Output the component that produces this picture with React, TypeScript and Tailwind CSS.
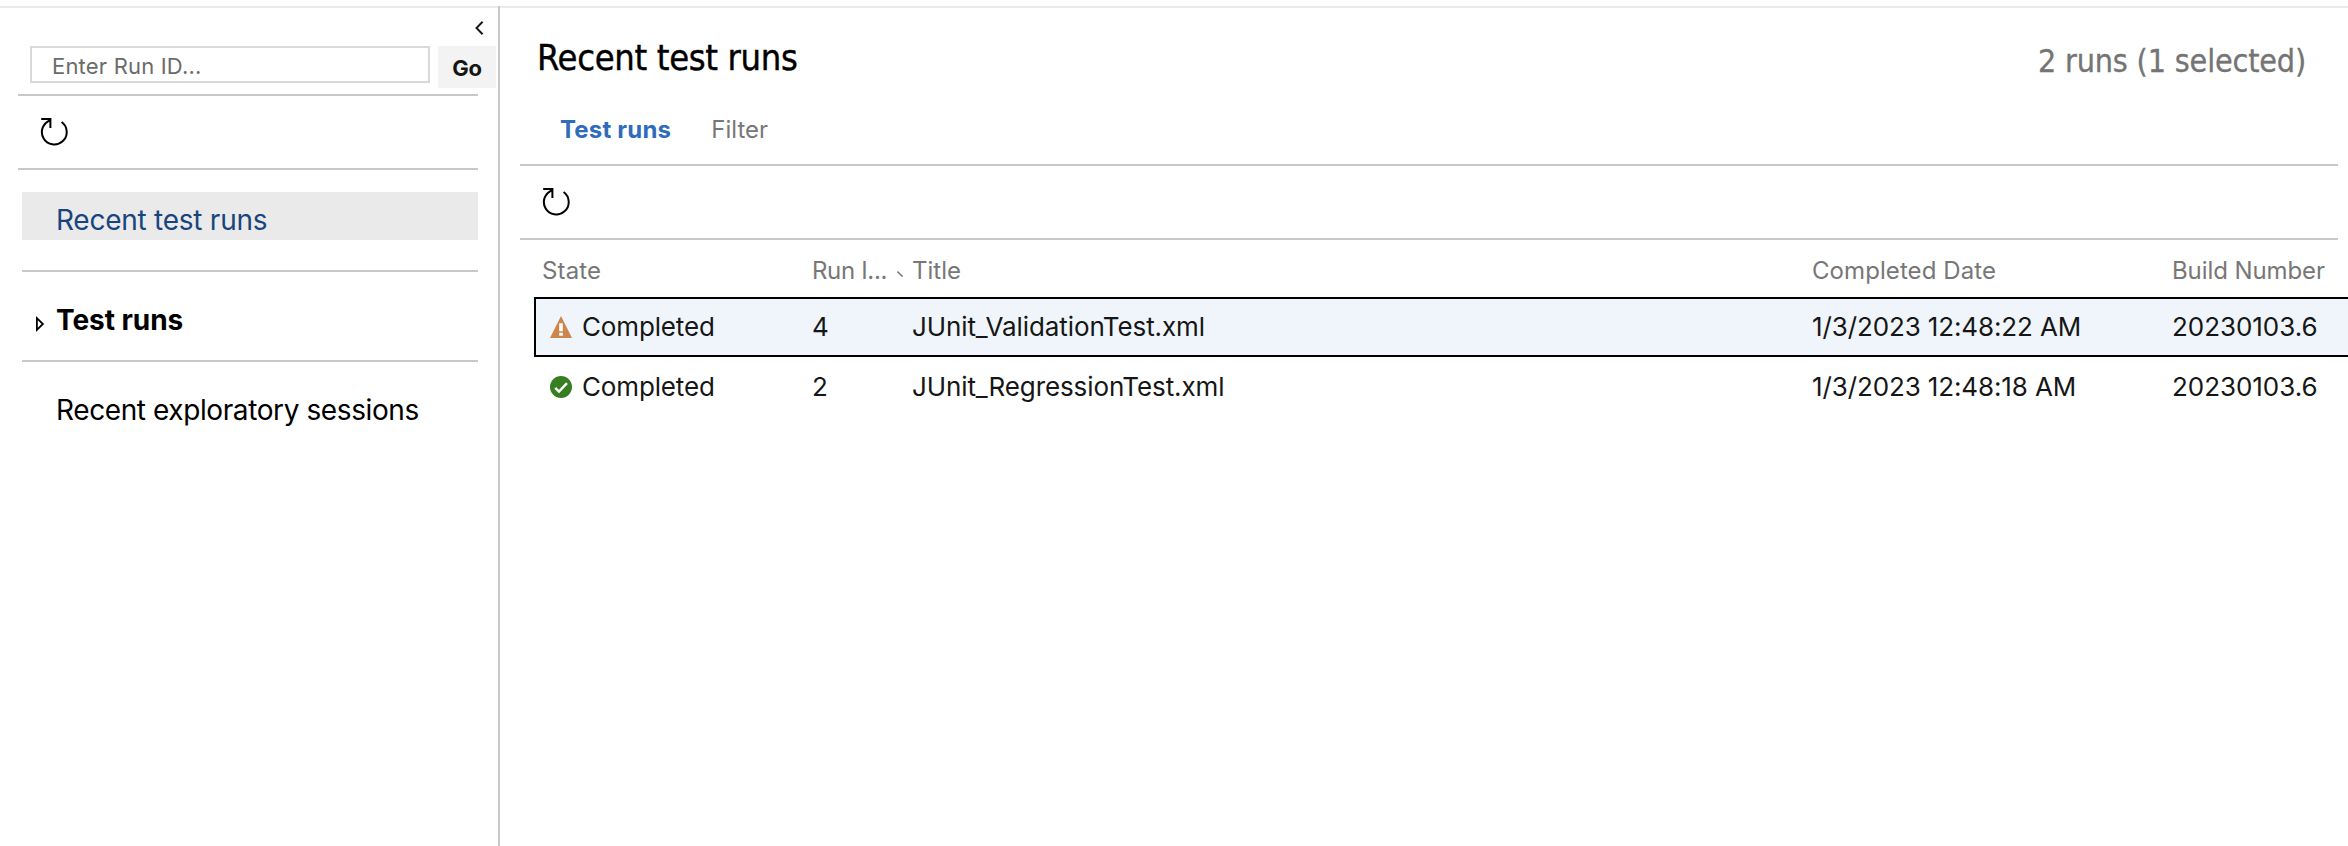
type Run = {
  state: "warning" | "passed";
  id: number;
  title: string;
  date: string;
  build: string;
  selected: boolean;
};

const runs: Run[] = [
  { state: "warning", id: 4, title: "JUnit_ValidationTest.xml", date: "1/3/2023 12:48:22 AM", build: "20230103.6", selected: true },
  { state: "passed", id: 2, title: "JUnit_RegressionTest.xml", date: "1/3/2023 12:48:18 AM", build: "20230103.6", selected: false },
];

function RefreshIcon() {
  return (
    <svg width="28" height="30" viewBox="0 0 28 30" fill="none" stroke="#000" strokeWidth="2" className="block">
      <path d="M21.6 5A12.4 12.4 0 1 1 10.6 3.2" />
      <path d="M1.2 2H10.4V11" />
    </svg>
  );
}

function WarningIcon() {
  return (
    <svg width="22" height="22" viewBox="0 0 22 22" className="block shrink-0">
      <path d="M11 0L22 22H0Z" fill="#cd854b" />
      <path d="M9.2 7.3h3.6v8H9.2zM9.2 16.8h3.6v3H9.2z" fill="#fff" />
    </svg>
  );
}

function PassedIcon() {
  return (
    <svg width="22" height="22" viewBox="0 0 22 22" className="block shrink-0">
      <circle cx="11" cy="11" r="11" fill="#377d22" />
      <path d="M5.2 11.8L9 15.6L17 7.2" fill="none" stroke="#fff" strokeWidth="2.4" />
    </svg>
  );
}

function Sidebar() {
  return (
    <aside className="-mt-[2px] flex w-[500px] shrink-0 flex-col border-r-2 border-[#c8c8c8] pt-[2px]">
      <div className="flex h-[38px] items-end justify-end pr-[14px]">
        <svg width="9" height="14" viewBox="0 0 9 14" fill="none" stroke="#1a1a1a" strokeWidth="2" className="mb-[11px] block">
          <path d="M7.6 0.7L1.5 7L7.6 13.3" />
        </svg>
      </div>
      <div className="flex h-12 items-start pl-[30px]">
        <input
          placeholder="Enter Run ID..."
          className="h-[37px] w-[400px] border-2 border-[#d9d9d9] pt-[3px] pl-5 text-[22px] tracking-[0.19px] text-black placeholder:text-[#6b6b6b]"
        />
        <button className="ml-2 h-[42px] w-[58px] bg-[#f3f3f3] pt-[2px] text-[22px] leading-10 font-bold tracking-[-0.3px] text-[#161616]">Go</button>
      </div>
      <div className="ml-[18px] flex h-[76px] w-[460px] items-center border-y-2 border-[#c8c8c8] pl-[22px]">
        <RefreshIcon />
      </div>
      <nav className="ml-[22px] flex w-[456px] flex-col text-[28px] leading-10 text-black">
        <a className="mt-[22px] h-12 bg-[#eaeaea] pt-2 pl-[34px] tracking-[-0.25px] text-[#19457e]">Recent test runs</a>
        <div className="mt-[30px] flex h-[92px] items-center border-y-2 border-[#c8c8c8] pt-2 pl-[14px] font-bold tracking-[-0.06px]">
          <svg width="9" height="16" viewBox="0 0 9 16" fill="none" stroke="#000" strokeWidth="1.8" className="mt-[7px] block">
            <path d="M0.9 2.2V13.8L6.9 8Z" />
          </svg>
          <span className="ml-[11px]">Test runs</span>
        </div>
        <a className="flex h-24 items-center pl-[34px] tracking-[-0.4px]">Recent exploratory sessions</a>
      </nav>
    </aside>
  );
}

function RunRow({ run }: { run: Run }) {
  return (
    <div
      className={
        "ml-[34px] grid h-[60px] grid-cols-[276px_100px_900px_360px_1fr] items-center border-y-2 border-l-2 pb-px text-[26px] leading-8 text-[#161616] " +
        (run.selected ? "border-black bg-[#eff5fb]" : "border-transparent")
      }
    >
      <div className="flex items-center gap-[10px] pl-[14px] tracking-[-0.143px]">
        {run.state === "warning" ? <WarningIcon /> : <PassedIcon />}
        <span>Completed</span>
      </div>
      <div>{run.id}</div>
      <div className="tracking-[-0.1px]">{run.title}</div>
      <div className="tracking-[-0.12px]">{run.date}</div>
      <div className="tracking-[-0.05px]">{run.build}</div>
    </div>
  );
}

function Main() {
  return (
    <main className="flex min-w-0 grow flex-col overflow-hidden">
      <header className="flex h-[100px] items-center justify-between pr-[42px] pl-[37px] font-['DejaVu_Sans_Condensed','DejaVu_Sans',sans-serif] leading-[44px]">
        <h1 className="text-[36px] tracking-[-0.327px] text-black [-webkit-text-stroke:0.4px_#000]">Recent test runs</h1>
        <span className="pt-[5px] text-[32px] tracking-[-0.175px] text-[#747474] [-webkit-text-stroke:0.3px_#747474]">2 runs (1 selected)</span>
      </header>
      <div className="flex h-14 items-center gap-10 pb-3 pl-[60px] text-[24px] leading-8">
        <span className="font-bold tracking-[0.2px] text-[#2f6cbb]">Test runs</span>
        <span className="text-[#777]">Filter</span>
      </div>
      <div className="ml-5 flex h-[76px] w-[1818px] items-center border-y-2 border-[#c8c8c8] pl-[22px]">
        <RefreshIcon />
      </div>
      <div className="ml-[34px] grid h-[57px] grid-cols-[278px_100px_900px_360px_1fr] items-center pt-1 text-[24px] leading-8 whitespace-nowrap text-[#777]">
        <span className="pl-2 tracking-[0.13px]">State</span>
        <span className="flex items-center">
          <span className="w-[85px] tracking-[-0.334px]">Run I...</span>
          <svg width="6" height="6" viewBox="0 0 6 6" className="mt-[6px] block" fill="none" stroke="#777" strokeWidth="1.5">
            <path d="M0.4 0.6L5.6 5.6" />
          </svg>
        </span>
        <span>Title</span>
        <span className="tracking-[0.08px]">Completed Date</span>
        <span className="tracking-[-0.086px]">Build Number</span>
      </div>
      {runs.map((run) => (
        <RunRow key={run.id} run={run} />
      ))}
    </main>
  );
}

export default function App() {
  return (
    <div className="flex h-screen flex-col overflow-hidden bg-white pt-[6px] font-['Inter','Liberation_Sans',sans-serif]">
      <div className="h-[2px] shrink-0 bg-[#eaeaea]" />
      <div className="flex min-h-0 grow">
        <Sidebar />
        <Main />
      </div>
    </div>
  );
}
